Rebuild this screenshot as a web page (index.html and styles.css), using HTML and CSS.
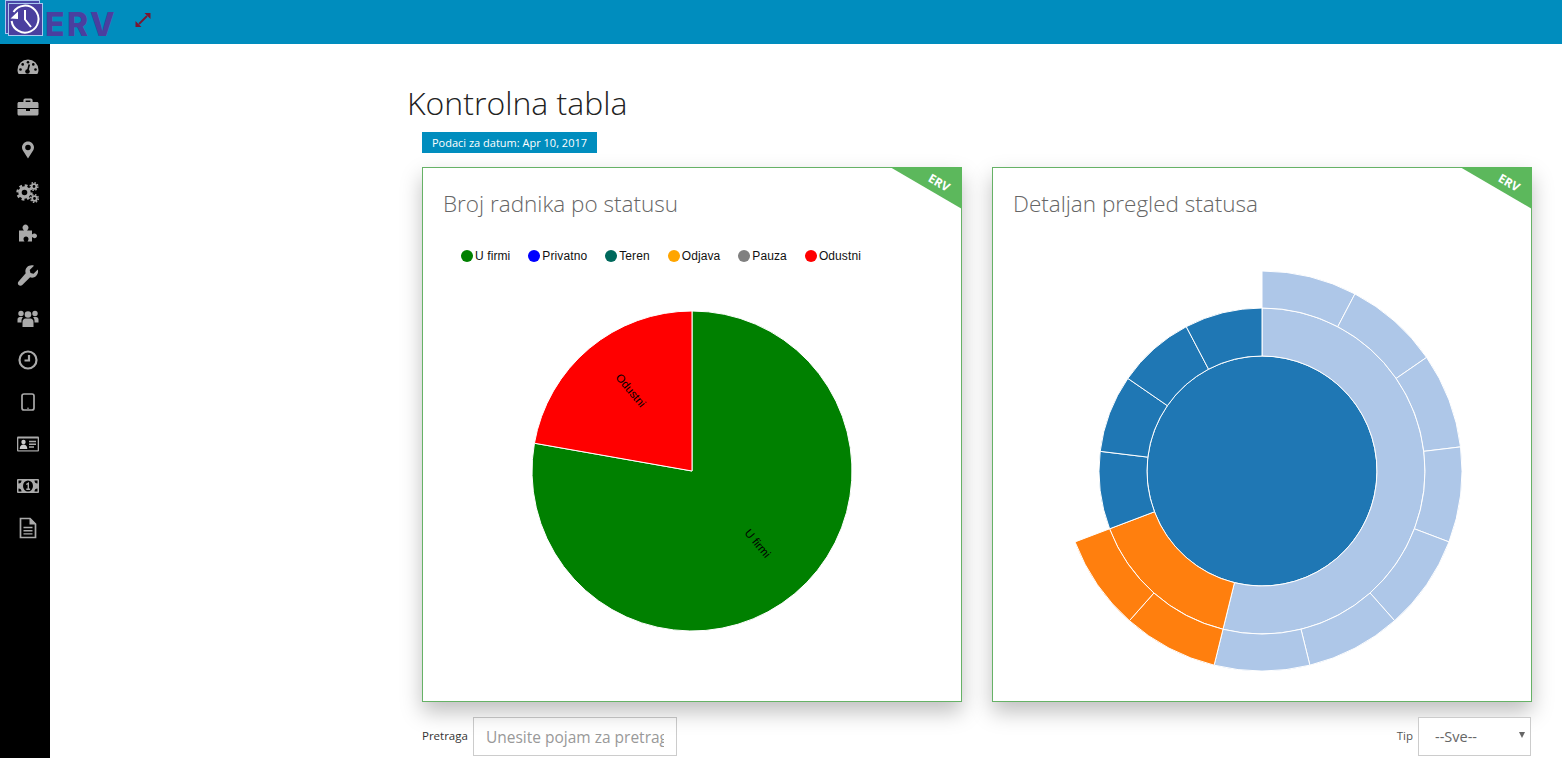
FILE: index.html
```html
<!DOCTYPE html>
<html lang="en">
<head>
  <meta charset="UTF-8">
  <title>ERV - Kontrolna tabla</title>
  <link rel="stylesheet" href="styles.css">
</head>
<body>
  <header class="topbar">
    <svg class="logo-mark" viewBox="0 0 44 44" width="44" height="44">
      <rect class="logo-back" x="5.5" y="0.5" width="34" height="33"/>
      <rect class="logo-front" x="8.5" y="3.5" width="34" height="32"/>
      <path class="logo-clock" d="M13.500 12A13.500 13.500 0 1 1 11.600 21"/>
      <path class="logo-clock" d="M25 10v9.500l6 7.500"/>
      <path class="logo-arrow" d="M10.500 18.500L18 11.500V19z"/>
    </svg>
    <span class="logo-text">ERV</span>
    <svg class="expand-icon" viewBox="0 0 16 16" width="16" height="16">
      <path class="expand-line" d="M4 12L12 4"/>
      <path class="expand-head" d="M9.500 1H15.500V7zM0.500 9L6.500 15H0.500z"/>
    </svg>
  </header>

  <div class="layout">
    <nav class="sidebar">
      <a class="nav-item"><svg viewBox="0 0 24 24" width="24" height="24">
        <path class="ic" d="M1.500 16a10.500 10.500 0 0 1 21 0c0 1.500-.5 3-1.200 4H2.700c-.7-1-1.200-2.500-1.200-4z"/>
        <circle class="ic-dark" cx="12" cy="8.200" r="1.300"/><circle class="ic-dark" cx="6.700" cy="10.400" r="1.300"/>
        <circle class="ic-dark" cx="17.300" cy="10.400" r="1.300"/><circle class="ic-dark" cx="4.500" cy="15.500" r="1.300"/>
        <circle class="ic-dark" cx="19.500" cy="15.500" r="1.300"/><circle class="ic-dark" cx="11.500" cy="17.500" r="2.300"/>
        <path class="ic-needle" d="M11.700 17l1.600-6.500"/>
      </svg></a>
      <a class="nav-item"><svg viewBox="0 1 24 24" width="24" height="24">
        <path class="ic-line" d="M8.500 7.500V5.200c0-.4.3-.7.7-.7h5.600c.4 0 .7.3.7.7v2.300"/>
        <path class="ic" d="M3 7h18c.8 0 1.500.7 1.500 1.500V13h-21V8.500C1.500 7.700 2.200 7 3 7zM1.500 14h8.500v2h4v-2h8.500v5c0 .8-.7 1.500-1.500 1.500H3c-.8 0-1.500-.7-1.500-1.500z"/>
      </svg></a>
      <a class="nav-item"><svg viewBox="0 0 24 24" width="24" height="24">
        <path class="ic" fill-rule="evenodd" d="M12 3.500c-3.300 0-6 2.700-6 6 0 1 .3 1.800.6 2.500l5.400 8.500 5.400-8.500c.3-.7.6-1.500.6-2.500 0-3.300-2.700-6-6-6zM12 6.700a2.800 2.800 0 1 1 0 5.600 2.800 2.800 0 0 1 0-5.600z"/>
      </svg></a>
      <a class="nav-item"><svg viewBox="0 0 24 24" width="24" height="24">
        <circle class="gear-ring" cx="8.500" cy="12.500" r="4.500"/><circle class="gear-teeth" cx="8.500" cy="12.500" r="7"/>
        <circle class="gear-ring-sm" cx="18" cy="6.500" r="2.300"/><circle class="gear-teeth-sm" cx="18" cy="6.500" r="3.800"/>
        <circle class="gear-ring-sm" cx="18.500" cy="18.500" r="2.300"/><circle class="gear-teeth-sm" cx="18.500" cy="18.500" r="3.800"/>
      </svg></a>
      <a class="nav-item"><svg viewBox="0 1.500 24 24" width="24" height="24">
        <path class="ic" d="M3 21V10h5c-1-1-1.500-1.800-1.500-3 0-1.500 1.500-3 3-3s3 1.500 3 3c0 1.200-.5 2-1.500 3h5v4c1-.8 1.700-1 2.500-1 1.400 0 2.500 1 2.500 2.300s-1.100 2.400-2.500 2.400c-.8 0-1.500-.4-2.500-1.100V21h-4.500c.7-1 1-1.600 1-2.500 0-1.300-1-2.500-2.500-2.500s-2.500 1.200-2.500 2.500c0 .9.3 1.500 1 2.500z"/>
      </svg></a>
      <a class="nav-item"><svg viewBox="0 0 24 24" width="24" height="24">
        <path class="ic" d="M21.800 5.500l-4.300 4.300-3-.8-.8-3 4.300-4.300c-2.500-.9-5.300-.2-7 1.500-1.600 1.600-2 4-1.300 6L2.600 17.400c-1 1-1 2.700 0 3.700s2.700 1 3.700 0l7.800-7.800c2 .7 4.400.3 6-1.300 1.700-1.700 2.500-4.300 1.700-6.500z"/>
      </svg></a>
      <a class="nav-item"><svg viewBox="0 0 24 24" width="24" height="24">
        <circle class="ic" cx="12" cy="8.500" r="3.300"/><circle class="ic" cx="5" cy="7.500" r="2.700"/><circle class="ic" cx="19" cy="7.500" r="2.700"/>
        <path class="ic" d="M6.500 21v-5c0-2 1.500-3.500 3-3.500h5c1.500 0 3 1.500 3 3.500v5z"/>
        <path class="ic" d="M1.500 16.500v-3c0-1.500 1-2.500 2.500-2.500h3c-.8 1-1.500 2.200-1.500 3.500v2zM22.500 16.500v-3c0-1.500-1-2.500-2.500-2.500h-3c.8 1 1.500 2.200 1.500 3.500v2z"/>
      </svg></a>
      <a class="nav-item"><svg viewBox="0 0 24 24" width="24" height="24">
        <circle class="ic-line" cx="12" cy="12" r="8.500"/>
        <path class="ic-line" d="M13 7v5.500H8.500"/>
      </svg></a>
      <a class="nav-item"><svg viewBox="0 0 24 24" width="24" height="24">
        <rect class="ic-thin" x="6" y="4" width="12" height="16" rx="2"/>
        <circle class="ic" cx="12" cy="18.300" r=".8"/>
      </svg></a>
      <a class="nav-item"><svg viewBox="0 0 24 24" width="24" height="24">
        <rect class="ic" x="1" y="4.500" width="22" height="15" rx="1"/>
        <rect class="ic-dark" x="2.300" y="6.500" width="19.400" height="11.800"/>
        <circle class="ic-light" cx="7.500" cy="10" r="2.200"/>
        <path class="ic-light" d="M3.700 17c0-3 1.500-4.500 3.800-4.500s3.800 1.500 3.800 4.500z"/>
        <path class="ic-bar" d="M13 9.500h7M13 12.300h7M13 15h5"/>
      </svg></a>
      <a class="nav-item"><svg viewBox="0 0 24 24" width="24" height="24">
        <rect class="ic" x="1" y="5" width="22" height="14" rx="1"/>
        <path class="ic-dark" d="M2.500 6.500h3a3 3 0 0 1-3 3zM21.500 6.500h-3a3 3 0 0 0 3 3zM2.500 17.500h3a3 3 0 0 0-3-3zM21.500 17.500h-3a3 3 0 0 1 3-3z"/>
        <ellipse class="ic-dark" cx="12" cy="12" rx="5" ry="5.500"/>
        <path class="ic-bar" d="M10.300 10.500l2-1.300v6M10.300 15.200h3.800"/>
      </svg></a>
      <a class="nav-item"><svg viewBox="0 0 24 24" width="24" height="24">
        <path class="ic-thin" d="M4.500 2.500H14L19.500 8v13.500h-15z"/>
        <path class="ic" d="M13.500 2.500h1l5 5v1h-6z"/>
        <path class="ic-bar" d="M7.500 11.500h9M7.500 14.700h9M7.500 17.900h9"/>
      </svg></a>
    </nav>

    <main class="content">
      <h1 class="page-title">Kontrolna tabla</h1>
      <div class="inner">
        <div class="date-badge">Podaci za datum: Apr 10, 2017</div>
        <div class="cards">
          <section class="card">
            <div class="ribbon"><span>ERV</span></div>
            <h2 class="card-title">Broj radnika po statusu</h2>
            <ul class="legend">
              <li><i class="dot dot-green"></i>U firmi</li>
              <li><i class="dot dot-blue"></i>Privatno</li>
              <li><i class="dot dot-teal"></i>Teren</li>
              <li><i class="dot dot-orange"></i>Odjava</li>
              <li><i class="dot dot-grey"></i>Pauza</li>
              <li><i class="dot dot-red"></i>Odustni</li>
            </ul>
            <svg class="pie" viewBox="-162 -162 324 324" width="324" height="324">
              <path class="pie-green" d="M0 0V-160A160 160 0 1 1 -157.570 -27.780Z"/>
              <path class="pie-red" d="M0 0L-157.570 -27.780A160 160 0 0 1 0 -160Z"/>
              <text class="pie-label" transform="translate(-62 -80) rotate(50)">Odustni</text>
              <text class="pie-label" transform="translate(65 73) rotate(50)">U firmi</text>
            </svg>
          </section>
          <section class="card">
            <div class="ribbon"><span>ERV</span></div>
            <h2 class="card-title">Detaljan pregled statusa</h2>
            <svg class="sunburst" id="sunburst" viewBox="-202 -202 404 404" width="404" height="404"></svg>
          </section>
        </div>
        <div class="filters">
          <div class="filter">
            <label for="search">Pretraga</label>
            <input id="search" type="text" placeholder="Unesite pojam za pretragu">
          </div>
          <div class="filter">
            <label class="label-muted" for="type">Tip</label>
            <div class="select-wrap">
              <select id="type"><option>--Sve--</option></select>
            </div>
          </div>
        </div>
      </div>
    </main>
  </div>

  <script>
    const sunburst = document.getElementById('sunburst');
    const step = 360 / 13;
    // [first slice, slice count, inner radius, outer radius, class]
    const arcs = [
      [0, 7, 115, 163, 'light'],
      [7, 2, 115, 163, 'orange'],
      [9, 1, 115, 163, 'blue'], [10, 1, 115, 163, 'blue'],
      [11, 1, 115, 163, 'blue'], [12, 1, 115, 163, 'blue']
    ];
    for (let i = 0; i < 7; i++) arcs.push([i, 1, 163, 200, 'light']);
    for (let i = 7; i < 9; i++) arcs.push([i, 1, 163, 200, 'orange']);
    function point(r, deg) {
      const a = deg * Math.PI / 180;
      return (r * Math.sin(a)).toFixed(2) + ' ' + (-r * Math.cos(a)).toFixed(2);
    }
    function addShape(tag, attrs) {
      const el = document.createElementNS('http://www.w3.org/2000/svg', tag);
      Object.keys(attrs).forEach(key => el.setAttribute(key, attrs[key]));
      sunburst.appendChild(el);
    }
    addShape('circle', { r: 115, class: 'arc arc-blue' });
    arcs.forEach(([start, count, r0, r1, name]) => {
      const a0 = start * step;
      const a1 = (start + count) * step;
      const large = a1 - a0 > 180 ? 1 : 0;
      const d = 'M' + point(r0, a0) + 'L' + point(r1, a0) +
        'A' + r1 + ' ' + r1 + ' 0 ' + large + ' 1 ' + point(r1, a1) +
        'L' + point(r0, a1) +
        'A' + r0 + ' ' + r0 + ' 0 ' + large + ' 0 ' + point(r0, a0) + 'Z';
      addShape('path', { d: d, class: 'arc arc-' + name });
    });
  </script>
</body>
</html>
```

FILE: styles.css
```css
* {
  box-sizing: border-box;
}
html, body {
  height: 100%;
}
body {
  margin: 0;
  overflow: hidden;
  background: #ffffff;
  font-family: 'Open Sans', sans-serif;
  color: #333;
}
.topbar {
  height: 44px;
  background-color: #008dbe;
  display: flex;
  align-items: center;
}
.logo-mark {
  flex: none;
}
.logo-back {
  fill: #4a47a8;
  stroke: #a9c8ef;
}
.logo-front {
  fill: #4a3f9f;
  stroke: #a9c8ef;
}
.logo-clock {
  fill: none;
  stroke: #fff;
  stroke-width: 2;
}
.logo-arrow {
  fill: #fff;
}
.logo-text {
  margin-left: 1px;
  width: 72px;
  font-family: 'Inter', sans-serif;
  font-weight: 800;
  font-size: 32px;
  letter-spacing: 2.5px;
  color: #4a3f9f;
  position: relative;
  top: 2px;
}
.expand-icon {
  margin-left: 18px;
  margin-top: -5px;
}
.expand-line {
  stroke: #7b1530;
  stroke-width: 1.8;
}
.expand-head {
  fill: #7b1530;
}
.layout {
  display: flex;
  height: calc(100% - 44px);
}
.sidebar {
  width: 50px;
  flex: none;
  background: #000;
  padding-top: 1px;
}
.nav-item {
  height: 42px;
  display: flex;
  align-items: center;
  justify-content: center;
}
.nav-item svg {
  margin-left: 5px;
}
.ic {
  fill: #aaa;
}
.ic-dark {
  fill: #000;
}
.ic-light {
  fill: #ccc;
}
.ic-needle {
  stroke: #000;
  stroke-width: 1.6;
}
.ic-line {
  fill: none;
  stroke: #aaa;
  stroke-width: 2.2;
}
.ic-thin {
  fill: none;
  stroke: #aaa;
  stroke-width: 1.7;
}
.ic-bar {
  fill: none;
  stroke: #aaa;
  stroke-width: 1.4;
}
.gear-ring {
  fill: none;
  stroke: #aaa;
  stroke-width: 3.4;
}
.gear-teeth {
  fill: none;
  stroke: #aaa;
  stroke-width: 2.4;
  stroke-dasharray: 2.8 2.7;
}
.gear-ring-sm {
  fill: none;
  stroke: #aaa;
  stroke-width: 1.8;
}
.gear-teeth-sm {
  fill: none;
  stroke: #aaa;
  stroke-width: 1.5;
  stroke-dasharray: 1.5 1.485;
}
.content {
  flex: 1;
  padding-left: 357px;
  padding-right: 30px;
}
.page-title {
  margin: 0;
  padding-top: 37px;
  height: 88px;
  font-weight: 300;
  font-size: 32px;
  line-height: 44px;
  color: #222;
}
.inner {
  padding-left: 15px;
}
.date-badge {
  display: inline-block;
  vertical-align: top;
  width: 175px;
  height: 21px;
  background: #008dbe;
  color: #fff;
  font-size: 11px;
  line-height: 21px;
  text-align: center;
}
.cards {
  display: grid;
  grid-template-columns: 540px 540px;
  column-gap: 30px;
  margin-top: 13px;
}
.card {
  position: relative;
  height: 535px;
  border: 1px solid #66b266;
  background: #fff;
  box-shadow: 0 10px 20px rgba(0, 0, 0, 0.25);
  display: flex;
  flex-direction: column;
  align-items: center;
}
.ribbon {
  position: absolute;
  top: -1px;
  right: -1px;
  width: 72px;
  height: 42px;
  background: #5cb85c;
  clip-path: polygon(0 0, 100% 0, 100% 100%);
}
.ribbon span {
  position: absolute;
  left: 38px;
  top: 8px;
  color: #fff;
  font-size: 12px;
  font-weight: 700;
  line-height: 15px;
  transform: rotate(30deg);
}
.card-title {
  align-self: flex-start;
  margin: 20px 0 0 20px;
  height: 32px;
  font-weight: 300;
  font-size: 22.5px;
  line-height: 32px;
  color: #666;
}
.legend {
  align-self: flex-start;
  list-style: none;
  display: flex;
  gap: 18px;
  margin: 28px 0 0 38px;
  padding: 0;
  height: 16px;
  font-family: 'Liberation Sans', sans-serif;
  font-size: 12px;
  letter-spacing: 0.1px;
  line-height: 16px;
  color: #111;
}
.legend li {
  display: flex;
  align-items: center;
  gap: 2px;
}
.dot {
  width: 12px;
  height: 12px;
  border-radius: 50%;
}
.dot-green { background: #008000; }
.dot-blue { background: #0000ff; }
.dot-teal { background: #00695c; }
.dot-orange { background: #ffa500; }
.dot-grey { background: #808080; }
.dot-red { background: #ff0000; }
.pie {
  margin-top: 45px;
}
.pie-green {
  fill: #008000;
  stroke: #fff;
}
.pie-red {
  fill: #ff0000;
  stroke: #fff;
}
.pie-label {
  font-family: 'Liberation Sans', sans-serif;
  font-size: 11.5px;
  text-anchor: middle;
  dominant-baseline: middle;
  fill: #000;
}
.sunburst {
  margin-top: 49px;
}
.arc {
  stroke: #fff;
  stroke-width: 1;
}
.arc-blue { fill: #1f77b4; }
.arc-light { fill: #aec7e8; }
.arc-orange { fill: #ff7f0e; }
.filters {
  display: flex;
  justify-content: space-between;
  margin-top: 15px;
  padding-right: 1px;
}
.filter {
  display: flex;
  align-items: center;
  gap: 5px;
}
.filter label {
  font-size: 11.5px;
  color: #333;
  position: relative;
  top: -1px;
}
.filter .label-muted {
  color: #555;
}
input, select {
  height: 39px;
  border: 1px solid #ccc;
  border-radius: 0;
  background: #fff;
  font-family: 'Open Sans', sans-serif;
  font-size: 14.5px;
  color: #666;
  outline: none;
}
input {
  width: 204px;
  padding: 0 12px;
  font-size: 15.5px;
}
input::placeholder {
  color: #999;
}
select {
  width: 113px;
  padding: 0 16px;
  appearance: none;
}
.select-wrap {
  position: relative;
}
.select-wrap::after {
  content: "";
  position: absolute;
  right: 6px;
  top: 15px;
  border-left: 3px solid transparent;
  border-right: 3px solid transparent;
  border-top: 6px solid #666;
}
```
